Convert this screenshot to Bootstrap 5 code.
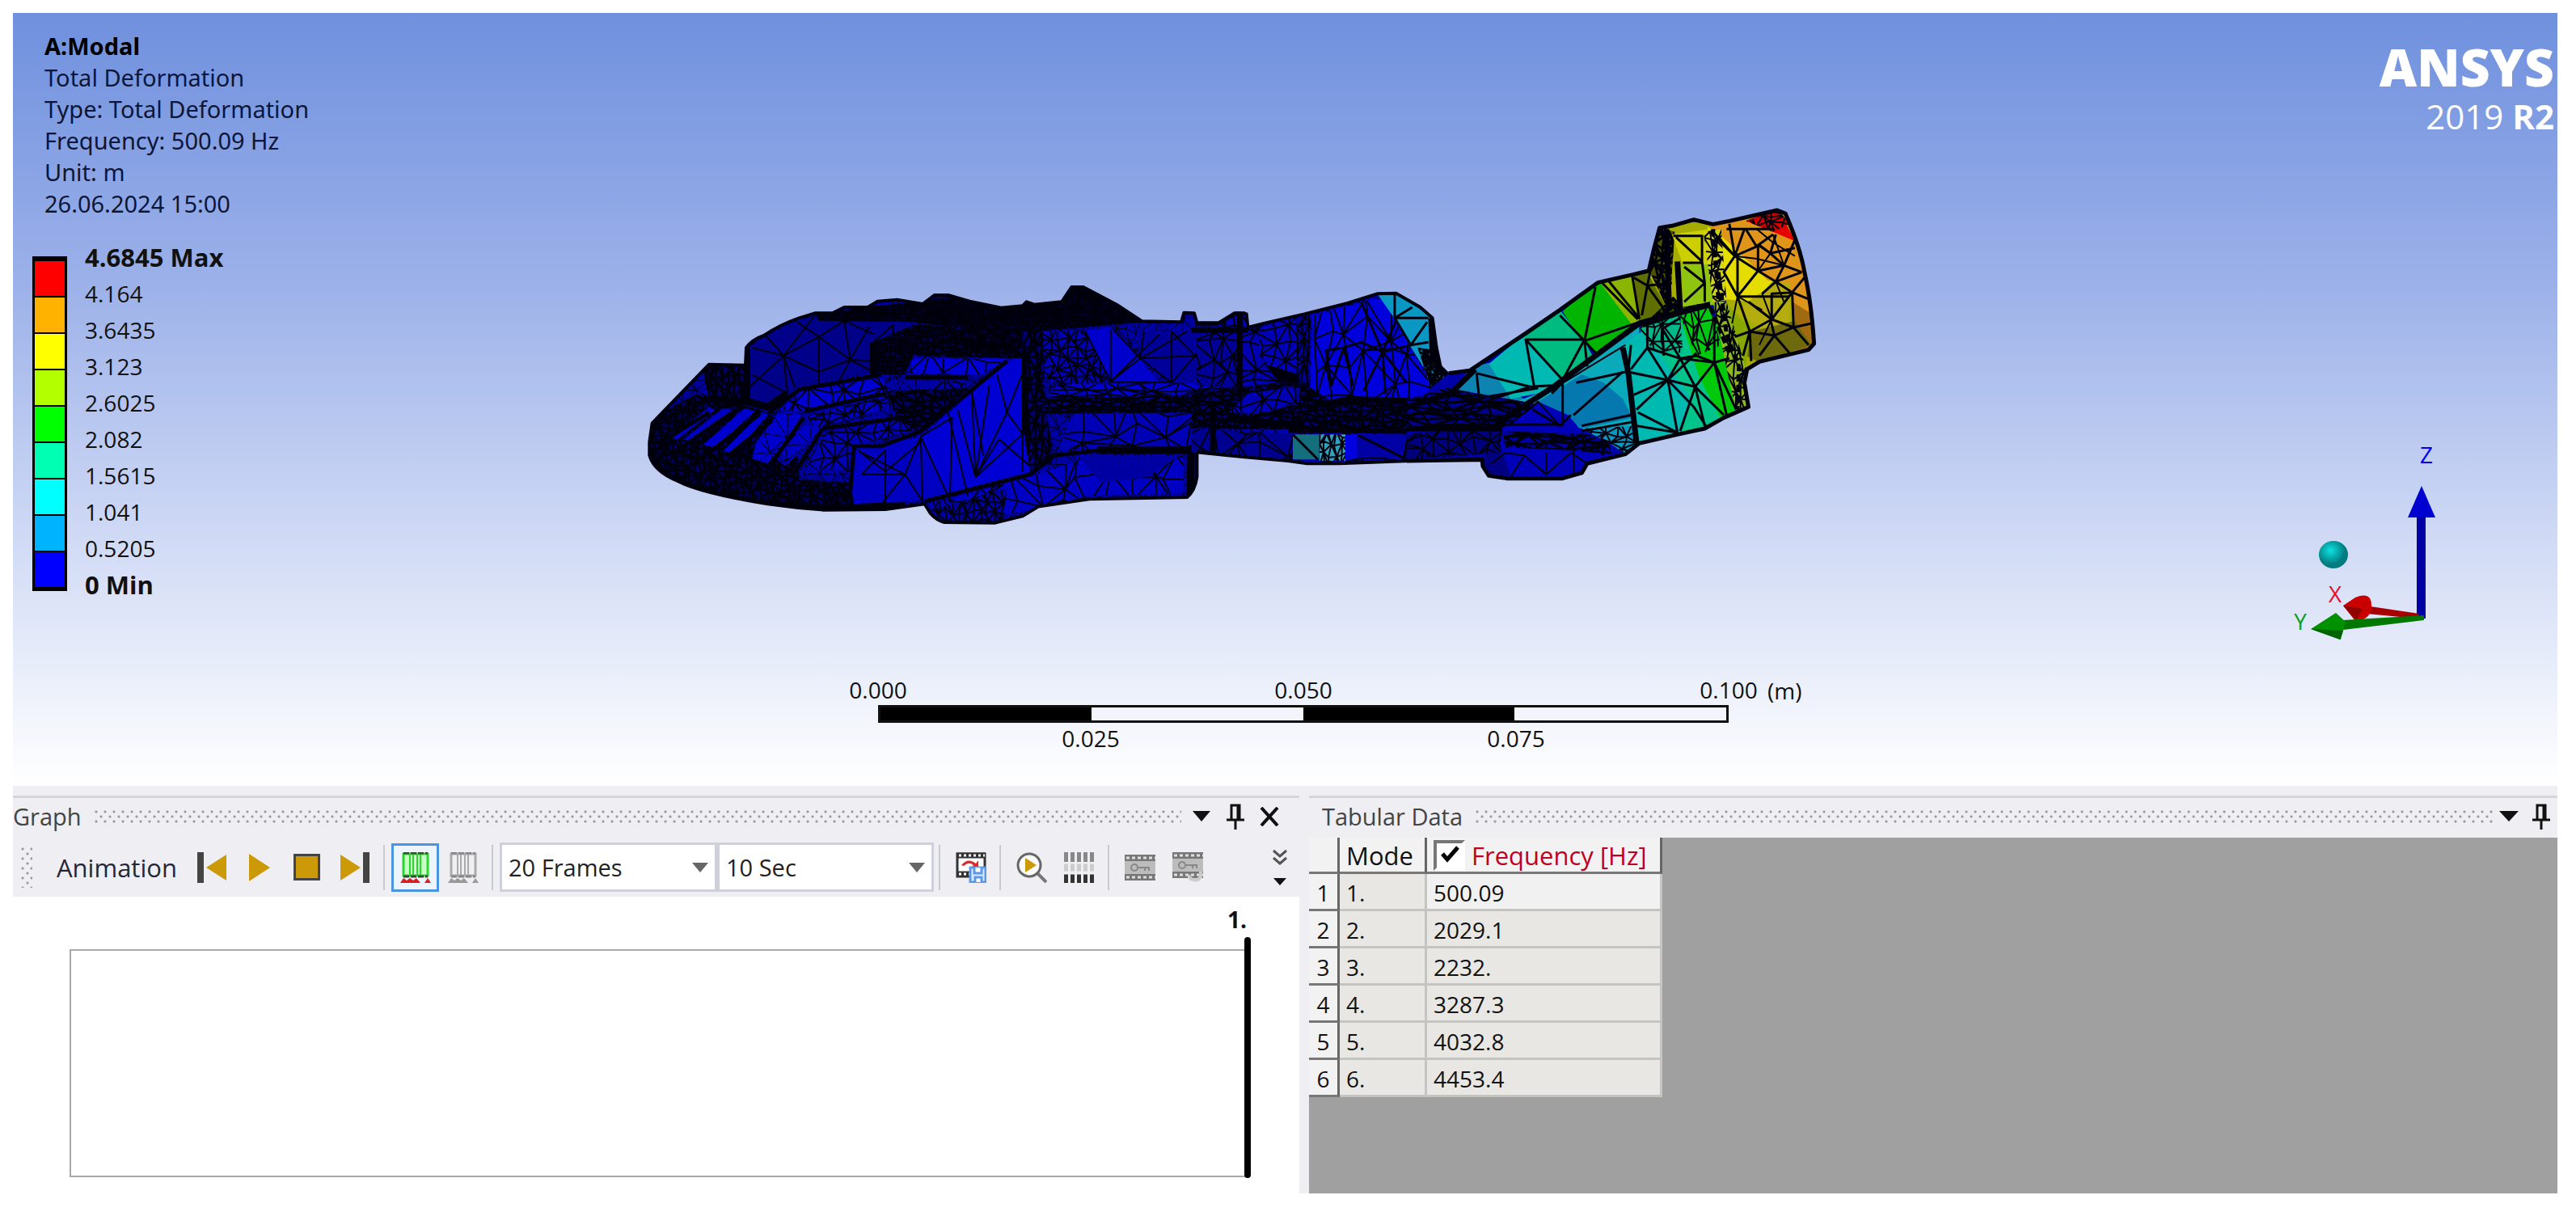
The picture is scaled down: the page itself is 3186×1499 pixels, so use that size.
<!DOCTYPE html>
<html lang="en">
<head>
<meta charset="utf-8">
<meta name="viewport" content="width=device-width, initial-scale=1">
<title>A:Modal - Total Deformation</title>
<link href="https://cdn.jsdelivr.net/npm/bootstrap@5.3.0/dist/css/bootstrap.min.css" rel="stylesheet">
<style>
  body { font-family: "Open Sans", "Noto Sans", sans-serif; font-size: 28px; line-height: 40px; color: #111; background: #fff; }
  .app-shell { min-height: 100vh; padding: 16px 23px 23px 16px; }
  .viewport3d { background: linear-gradient(#6f90de, #9cb1e9 35%, #d0daf5 68%, #fff); min-height: 800px; }
  .result-info { font-family: "Noto Sans", sans-serif; font-size: 29px; line-height: 39px; padding: 21px 0 0 39px; color: #0c1638; }
  .result-info strong { color: #000; }
  .legend { padding: 46px 0 0 24px; }
  .legend-bar { width: 43px; border: 3px solid #000; border-top-width: 6px; }
  .legend-bar i { display: block; height: 45px; border-bottom: 2px solid #000; }
  .legend-text { margin: -21px 0 0 22px; padding: 0; list-style: none; }
  .legend-text li { height: 45px; line-height: 45px; }
  .legend-text .fw-bold { font-size: 31px; }
  .brand { color: #fff; text-align: right; padding: 32px 4px 0 0; }
  .brand-name { font-size: 64px; line-height: 70px; font-weight: 800; }
  .brand-ver { font-size: 42px; line-height: 52px; }
  .brand-ver span { font-weight: 400; }
  .model { left: 0; top: 0; pointer-events: none; }
  .model .wire, .model .edge { fill: none; stroke: #00000c; vector-effect: non-scaling-stroke; stroke-linejoin: round; }
  .triad { right: 140px; bottom: 160px; width: 190px; height: 270px; }
  .triad text { font-size: 28px; font-family: "Open Sans", sans-serif; text-anchor: middle; }
  .ruler { left: 34%; width: 1052px; bottom: 40px; }
  .ruler-bar { height: 22px; border: 3px solid #111; background: #f4f5fc; }
  .ruler-bar i { width: 25%; }
  .ruler-bar i:nth-child(odd) { background: #000; }
  .ruler-row { height: 38px; line-height: 38px; }
  .ruler-row span { width: 0; display: flex; justify-content: center; white-space: nowrap; }
  .dock { background: #eeeef3; padding-top: 12px; gap: 12px; height: 504px; }
  .pane { border-top: 3px solid #d5d5db; }
  .pane-graph { width: 1591px; }
  .pane-head { height: 49px; padding-bottom: 4px; font-size: 29px; color: #444; }
  .dots { height: 16px; background-image: radial-gradient(circle at 2px 2px, #999 1px, transparent 2px), radial-gradient(circle at 8px 8px, #999 1px, transparent 2px); background-size: 11px 12px; }
  .grip { width: 14px; height: 50px; }
  .tool { width: 59px; height: 60px; padding: 0; border: 3px solid transparent; border-radius: 0; background: none; display: flex; align-items: center; justify-content: center; flex: none; }
  .tool.picked { border-color: #4a94e0; background: #eef4fd; }
  .head-tool { width: 42px; height: 42px; }
  .pane-table .head-tool { width: 40px; }
  .toolbar-row { height: 73px; padding: 0 12px 0 10px; color: #26263a; }
  .tool-label { margin-left: 30px; width: 162px; font-size: 31px; }
  .rule { width: 2px; height: 56px; background: #c9c9d0; margin: 0 8px 0 6px; }
  .pick { width: 269px; height: 61px; border: 3px solid #d0d0da; border-radius: 0; padding: 0 8px; font-size: 29px; line-height: 40px; color: #222; background: #fff url("data:image/svg+xml,%3Csvg xmlns='http://www.w3.org/2000/svg' width='20' height='12'%3E%3Cpath d='M0 0h20L10 12z' fill='%23666'/%3E%3C/svg%3E") no-repeat right 8px center; appearance: none; }
  .pick + .pick { width: 268px; margin-left: 0; }
  .plot { flex: 1; background: #fff; padding: 65px 63px 20px 70px; }
  .plot-box { border: 2px solid #a9a9a9; }
  .marker { width: 8px; top: -17px; bottom: -3px; right: -5px; background: #000; border-radius: 4px; }
  .marker-label { right: 0; top: -59px; font-weight: 700; font-size: 28px; }
  .sheet { flex: 1; background: #a0a0a0; }
  .modes { width: 437px; height: 321px; border-collapse: separate; border-spacing: 0; }
  .modes th, .modes td { padding: 2px 8px 0; font-weight: 400; line-height: 40px; border: solid #c4c4c0; border-width: 0 3px 3px 0; background: #e8e7e3; color: #111; }
  .modes th { background: #f2f2f2; border-color: #777; border-right-color: #666; }
  .modes thead th { font-size: 31px; }
  .modes tr > :first-child { width: 38px; padding: 2px 6px 0; text-align: center; }
  .modes tr > :nth-child(2) { width: 108px; }
  .modes tbody tr:first-child td:last-child { background: #f1f1f1; }
  .modes label { color: #c00020; }
  .tick { appearance: none; flex: none; width: 39px; height: 38px; margin: 0; border: 4px solid #fff; border-top-color: #777; border-left-color: #777; background: #fff; }
  .tick:checked { background: #fff url("data:image/svg+xml,%3Csvg xmlns='http://www.w3.org/2000/svg' viewBox='0 0 30 30'%3E%3Cpath d='M6 13l6 7L25 5' fill='none' stroke='%23000' stroke-width='5'/%3E%3C/svg%3E") center/contain; }
</style>
<script src="https://cdn.jsdelivr.net/npm/bootstrap@5.3.0/dist/js/bootstrap.bundle.min.js"></script>
</head>
<body>
<div class="app-shell d-flex flex-column">
  <main class="viewport3d position-relative flex-grow-1 d-flex justify-content-between align-items-start overflow-hidden">
    <svg class="model position-absolute w-100 h-100" viewBox="16 16 3147 956" aria-label="Deformed mesh">
      <defs>
        <clipPath id="cutHeel"><path d="M48 650L55 580 200 362 293 365 295 300 Q310 270 340 255 Q380 215 430 190L470 172 515 172 545 150 605 150 630 128 680 122 745 138 775 105 810 105 870 130 945 152 1000 145 1010 130 1030 140 1100 130 1125 75 1155 75 1240 140 1305 202 1405 205 1412 170 1438 172 1445 208 1500 208 1540 172 1570 172 1570 705 1510 695 1445 688 1445 780 Q1440 830 1420 855L1170 862 1040 890 1000 925 930 950 800 948 Q780 940 765 915L750 880 650 900 495 902 Q420 895 350 880 Q180 840 120 795 Q60 760 48 700Z"/></clipPath>
        <clipPath id="cutMid"><path d="M-20 212L75 212 150 172 185 175 190 225 250 210 400 175 560 135 670 100 740 98 830 150 875 190 890 300 905 370 935 400 1010 390 1130 300 1130 718 850 718 530 730 410 730 340 720 170 705 0 688 -20 686Z"/></clipPath>
        <clipPath id="cutToe"><path d="M60 745L153 665 230 655 430 520 560 430 700 328 830 298 885 285 905 200 925 125 970 118 1050 95 1120 112 1180 100 1355 60 1385 72 Q1440 200 1455 290 Q1480 400 1490 555L1470 578 1290 622 1245 650 1235 700 1250 790 1160 830 1090 870 1000 890 850 925 800 965 660 1000 640 1035 570 1055 365 1055 300 1045 278 1010 275 985 0 990 0 760Z"/></clipPath>
      </defs>

      <!-- heel block -->
      <g transform="translate(780 330) scale(.4847 .3333)">
        <g clip-path="url(#cutHeel)">
          <polygon points="40,60 1570,60 1570,960 40,960" fill="#0000a0" data-cell="34,44" data-w="1"/>
          <polygon points="300,300 345,255 470,180 700,205 740,250 620,290 620,390 420,450 330,520 300,480" fill="#000088"/>
          <polygon points="1160,235 1230,225 1350,430 1225,425" fill="#0000cd"/>
          <polygon points="1030,240 1160,235 1225,425 1100,440 1040,400" fill="#0000b0" data-cell="22,34" data-w="2"/>
          <polygon points="1290,240 1510,240 1520,430 1380,430 1300,330" fill="#000098"/>
          <polygon points="1090,435 1520,430 1520,480 1050,500" fill="#0000d0" data-cell="50,24" data-w="2"/>
          <polygon points="1130,540 1570,530 1570,700 1090,680" fill="#0000b4" data-cell="70,74" data-w="2"/>
          <polygon points="1440,590 1570,560 1570,700 1440,680" fill="#00007c" data-cell="50,50" data-w="2"/>
          <polygon points="950,370 1010,300 1020,760 750,860 570,880 580,680 740,630" fill="#0000d2"/>
          <polygon points="570,670 740,640 810,850 640,885 560,860" fill="#0000c0"/>
          <polygon points="760,880 1040,770 1140,720 1410,700 1410,840 1170,850 1000,910 800,940" fill="#0000c4" data-cell="56,90" data-w="2"/>
          <polygon points="1140,700 1400,700 1320,780 1200,800" fill="#0000a2"/>
          <polygon points="50,560 170,470 330,530 420,600 430,790 560,800 570,880 500,905 100,800 40,720" fill="#000058" data-cell="18,26" data-w="3"/>
          <polygon points="200,520 215,530 120,640 100,635" fill="#0000c0"/>
          <polygon points="235,525 262,530 160,650 135,640" fill="#0000c0"/>
          <polygon points="290,525 318,535 215,670 185,660" fill="#0000cc"/>
          <polygon points="335,540 352,548 265,690 235,685" fill="#0000cc"/>
          <polygon points="375,545 435,535 425,590 350,730 310,710 320,650" fill="#0000cc" data-cell="50,70" data-w="1"/>
          <polygon points="440,590 490,590 430,690 395,740 370,710" fill="#0000c4" data-cell="40,60" data-w="1"/>
          <polygon points="380,530 440,460 640,410 660,460 450,535" fill="#0000d0" data-cell="44,50" data-w="2"/>
          <polygon points="450,555 660,475 640,530 470,600" fill="#0000c0" data-cell="30,34" data-w="2"/>
          <polygon points="500,610 720,560 740,600 580,660 560,760 450,740" fill="#0000b4" data-cell="34,50" data-w="2"/>
          <polygon points="720,340 960,340 900,400 710,395" fill="#0000d6" data-cell="48,70" data-w="2"/>
          <polygon points="735,425 860,425 820,480 735,480" fill="#0000a4" data-cell="60,60" data-w="2"/>
          <polygon points="470,172 1140,60 1310,205 1030,240 950,250 720,205 480,200" fill="#000044" data-cell="14,16" data-w="3"/>
          <polygon points="720,215 1030,225 1010,340 720,330 700,400 620,400 620,280" fill="#000060" data-cell="20,17" data-w="3"/>
          <polygon points="180,365 295,365 300,500 200,490" fill="#000068" data-cell="14,40" data-w="3"/>
          <polygon points="1000,240 1050,240 1060,540 1080,700 1020,760 1000,600" fill="#000070" data-cell="16,50" data-w="3"/>
          <polygon points="1040,490 1560,470 1560,540 1040,545" fill="#000088" data-cell="30,16" data-w="3"/>
          <polygon points="765,900 960,820 950,950 800,950" fill="#0000a0" data-cell="18,44" data-w="2"/>
          <polygon points="1510,180 1570,175 1570,500 1520,520" fill="#000070" data-cell="16,80" data-w="3"/>
          <polygon points="650,460 860,450 740,620 680,560" fill="#000060" data-cell="24,24" data-w="3"/>
          <path class="wire" stroke-width="2" d="M390 330L470 180M390 330L300 450M390 330L480 260 560 345 480 390 390 330 400 470M390 330L310 300M390 330L420 450M480 260V440M480 260L420 200M480 260L545 200 560 345 620 390M560 345L610 220M560 345L530 430M560 345L620 350M545 200L620 250M310 400L400 470M345 255L390 330M670 215V270M740 210L690 270M670 215L620 280"/>
          <path class="wire" stroke-width="2" d="M1225 230L1225 425M1225 425L1160 240M1225 425L1350 250M1225 425L1300 340M1225 425L1380 430M1310 240L1300 340 1440 330 1500 240M1440 330L1380 240V430M1440 330L1520 420M1440 330L1380 430M1300 340L1380 430M1300 340L1230 230M1300 340L1420 240M1225 425L1100 330M1440 330L1520 300"/>
          <path class="wire" stroke-width="2" d="M740 630L810 850M740 630L745 880M740 630L700 770 590 690M740 630L820 560 815 850M835 530L880 780 870 460M880 780L915 440M880 780L960 540 935 400M960 540L1000 620M880 780L1000 620M960 540L1010 360M880 780L940 640 1020 740M870 460L900 700M1000 320V760M650 680L590 770 700 770 640 880M650 680V890M700 770L745 870M580 680L650 760 740 650M810 540L860 850"/>
          <path class="edge" stroke-width="5" d="M960 350L740 610 640 665 570 665 560 840M350 545L430 455 640 400M440 560L355 740M490 600L420 760M490 600L740 550M445 535L650 470M330 545L190 700M270 530L110 690M360 570L250 700M200 540L90 640M750 870L900 815 1020 770 1080 700 1200 680 1430 675M700 410H860M1005 300L1010 620"/>
          <path class="edge" stroke-width="9" d="M1190 680H1430L1428 850M296 300V500L350 520 400 470M300 500L200 490M620 280V400M820 270L980 300M48 680Q60 760 120 795 Q180 840 350 880L495 898 700 885"/>
        </g>
        <path class="edge" stroke-width="4" d="M1445 688L1445 780 Q1440 830 1420 855L1170 862 1040 890 1000 925 930 950 800 948 Q780 940 765 915L750 880 650 900 495 902 Q420 895 350 880 Q180 840 120 795 Q60 760 48 700L48 650 55 580 200 362 293 365 295 300 Q310 270 340 255 Q380 215 430 190L470 172 515 172 545 150 605 150 630 128 680 122 745 138 775 105 810 105 870 130 945 152 1000 145 1010 130 1030 140 1100 130 1125 75 1155 75 1240 140 1305 202 1405 205 1412 170 1438 172 1445 208 1500 208 1540 172 1568 172"/>
      </g>

      <!-- middle section -->
      <g transform="translate(1480 330) scale(.3333)">
        <g clip-path="url(#cutMid)">
          <polygon points="110,90 1130,90 1130,740 -20,740 -20,600 110,600" fill="#0000b0" data-cell="80,70" data-w="2"/>
          <polygon points="0,240 150,230 150,450 0,440" fill="#000098" data-cell="50,60" data-w="2"/>
          <polygon points="240,210 400,175 420,440 360,430 230,330" fill="#0000b8" data-cell="50,56" data-w="2"/>
          <polygon points="430,180 690,110 860,420 870,490 420,490" fill="#0000dc" data-cell="74,120" data-w="2"/>
          <polygon points="670,100 740,98 830,150 870,190 865,360 840,370 790,290 740,200" fill="#0a97c4"/>
          <polygon points="820,300 890,310 940,400 1010,390 880,490 860,420" fill="#126f86" data-cell="17,19" data-w="3"/>
          <polygon points="370,180 425,170 415,500 370,500" fill="#000090" data-cell="24,50" data-w="2"/>
          <polygon points="-20,470 380,420 500,500 880,500 1130,520 1130,610 -20,600" fill="#000070" data-cell="40,19" data-w="3"/>
          <polygon points="190,470 380,440 380,500 250,545 120,540" fill="#0000b4" data-cell="60,60" data-w="2"/>
          <polygon points="250,360 380,400 380,440 300,420" fill="#000070" data-cell="14,14" data-w="3"/>
          <polygon points="-20,600 360,620 360,725 -20,690" fill="#000090" data-cell="90,80" data-w="2"/>
          <polygon points="590,620 960,620 960,700 570,710" fill="#0000a4"/>
          <polygon points="357,622 455,622 455,715 357,715" fill="#146f7c"/>
          <polygon points="455,622 552,622 552,720 455,720" fill="#30a0bc" data-cell="20,40" data-w="2"/>
          <polygon points="552,622 595,622 595,710 552,710" fill="#0000e0"/>
          <path class="wire" stroke-width="3" d="M735 100V190H860M735 190L795 290 855 205M735 190L800 150M795 290L860 280M600 625L770 710 785 620M785 640L960 670 840 640M357 622L450 715M690 315L610 130M690 315L620 460M690 315L800 290M690 315L780 430M690 315L740 200M545 300L610 280 690 315M545 300L480 310 500 440 545 300 580 440M690 315L700 470"/>
          <path class="edge" stroke-width="7" d="M160 175V470M870 190L875 320 900 380M-20 235H190M420 520L560 490 880 500 1020 390M340 605L880 610 1020 585 1130 600M880 490L1130 300M60 500V690M110 565L400 590"/>
        </g>
        <path class="edge" stroke-width="4" d="M0 212H75L150 172 185 175 190 225 250 210 400 175 560 135 670 100 740 98 830 150 875 190 890 300 905 370 935 400 1010 390M1060 718H850L530 730H410L340 720 170 705 0 688"/>
      </g>

      <!-- toe and socket -->
      <g transform="translate(1740 240) scale(.338 .3333)">
        <g clip-path="url(#cutToe)">
          <rect x="0" y="50" width="1500" height="1010" fill="#0000a8"/>
          <polygon points="160,735 240,640 330,620 390,740 470,780 300,800" fill="#0d84b0"/>
          <polygon points="300,630 430,520 580,690 530,730 380,760" fill="#00b9b2"/>
          <polygon points="430,530 560,430 650,545 690,620 570,700" fill="#00bb80"/>
          <polygon points="570,435 700,320 850,490 700,590 640,545" fill="#00b400"/>
          <polygon points="700,320 830,290 860,480 820,480" fill="#8ab500"/>
          <polygon points="830,290 895,270 985,440 850,475" fill="#5f7000"/>
          <polygon points="320,800 530,720 850,480 860,940 640,870" fill="#0aaabb"/>
          <polygon points="480,770 640,670 720,700 790,760 825,830 640,870" fill="#0578b0"/>
          <polygon points="790,560 900,480 1010,450 1160,840 1000,900 850,930" fill="#00b9b0"/>
          <polygon points="860,500 1010,450 1080,660 1160,840 1000,890 1040,760" fill="#00c48a"/>
          <polygon points="1000,455 1100,420 1210,600 1250,800 1150,835 1070,680" fill="#00c80a"/>
          <polygon points="370,860 480,770 590,820 640,880 740,900 760,980 640,1060 300,1060 280,900" fill="#0000b8"/>
          <polygon points="640,870 830,860 850,930 800,965 750,930" fill="#0a98c0" data-cell="40,30" data-w="2"/>
          <polygon points="270,900 330,890 380,1050 290,1040" fill="#000080"/>
          <polygon points="0,890 350,860 340,960 0,985" fill="#00007c" data-cell="50,50" data-w="2"/>
          <polygon points="0,760 150,720 480,780 350,870 0,880" fill="#000090" data-cell="80,24" data-w="3"/>
          <polygon points="350,880 660,890 740,920 750,965 600,950 360,940" fill="#0000a0" data-cell="60,20" data-w="3"/>
          <polygon points="885,300 925,110 1120,100 1500,50 1500,600 1240,660 1130,400 1000,430 960,440" fill="#a6ad00"/>
          <polygon points="890,290 920,120 980,140 960,440" fill="#4d5200" data-cell="22,36" data-w="3"/>
          <polygon points="970,150 1110,130 1130,260 1010,260" fill="#ccd000"/>
          <polygon points="1005,260 1150,260 1140,410 1010,420" fill="#8fc510"/>
          <polygon points="1100,120 1210,200 1350,310 1270,400 1160,390 1110,240" fill="#e5dc00"/>
          <polygon points="1270,380 1400,310 1400,480 1330,520 1210,440" fill="#b5ac10"/>
          <polygon points="1110,120 1250,90 1420,150 1460,300 1480,470 1420,480 1400,330 1320,320 1200,200" fill="#df951a"/>
          <polygon points="1250,95 1360,55 1420,175 1340,140" fill="#e60000"/>
          <polygon points="1410,400 1490,450 1490,580 1420,580" fill="#a06a10"/>
          <polygon points="1260,510 1420,470 1480,560 1290,625 1240,600" fill="#6c6a0c"/>
          <polygon points="1160,400 1260,500 1240,640 1200,560" fill="#88a800"/>
          <polygon points="1120,400 1170,400 1250,680 1250,800 1205,810 1160,600" fill="#8cb81c" data-cell="26,54" data-w="2"/>
          <polygon points="1085,140 1150,130 1170,400 1120,400" fill="#d2d216" data-cell="30,40" data-w="2"/>
          <polygon points="975,380 1010,420 1110,400 1080,440 850,500" fill="#284800" data-cell="26,20" data-w="3"/>
          <polygon points="1240,100 1360,60 1400,110 1340,140" fill="#d00000" data-cell="34,26" data-w="2"/>
          <polygon points="1000,450 1110,420 1150,560 1060,600" fill="#00c810" data-cell="36,70" data-w="2"/>
          <polygon points="850,500 1000,450 1010,590 900,580" fill="#00b888" data-cell="46,44" data-w="2"/>
          <path class="wire" stroke-width="3" d="M435 540H650L570 690 435 540 465 710M560 450L650 545 690 345M650 545L850 475M650 545L700 600M650 545L660 640M715 330L845 465M740 325L850 460 825 305M255 665L450 715 530 710M255 665L265 760M230 665L165 735M300 765L450 715M190 770L480 720M290 765L380 800M265 790H370"/>
          <path class="wire" stroke-width="3" d="M820 560L810 660 955 690 880 570 820 650M955 690L830 745M955 690L840 800M955 690L1000 610 935 500M955 690L990 885M955 690L1055 715 1125 625 1000 610M955 690L1050 790 1100 870M1055 715L1090 860M1055 715L1000 880M1055 715L1160 820M1055 715L1000 610 1060 600 1125 625V480M1125 625L1170 820M1125 625L1205 800M845 810L990 885 840 860M620 700L800 660M530 740L570 700V860M610 820L790 660M370 855H560M460 800L560 860 600 820M640 860L820 820M640 880L830 845M880 570L1000 610M955 690L1060 590M880 490V570M935 500L1000 460M935 500L940 600M1125 625L1180 610"/>
          <path class="wire" stroke-width="3" d="M975 155H1080V250L985 160M1010 255H1080M1080 250L1090 330 1015 400M1090 330L1015 270M1090 330V400M1200 230L1120 140M1200 230L1130 160M1200 230L1235 130M1200 230L1280 195 1240 130M1200 230L1285 285 1210 380 1160 290 1200 230M1210 220V380M1285 285L1285 190 1340 150M1285 285L1350 325 1300 370M1285 285L1380 265 1330 220 1290 190M1380 265L1420 170M1380 265L1445 290M1380 265L1350 325 1410 365 1455 310M1330 220L1350 150M1330 220L1420 200M1410 365L1335 465 1415 495 1410 365 1470 390M1335 465V370L1410 365M1335 465L1255 510 1210 380M1335 465L1250 400M1255 510L1200 530M1255 510L1345 525 1415 495 1480 480M1255 510L1260 620M1345 525L1400 590M1345 525L1290 600M1255 510L1230 600M1210 380H1400M1345 525L1330 465M1170 130H1340M1180 110L1200 230M880 340L830 310M880 340L860 450M880 340L950 440M880 340L890 290M880 340L970 330M1445 290L1350 325M1415 495L1470 560"/>
          <path class="wire" stroke-width="2" d="M1200 230L1280 240 1380 265M1285 190L1330 220 1285 285M1300 370L1350 325 1380 400M1300 370L1335 465 1290 560M1280 130L1340 180 1420 230M1340 150L1380 265M1210 380L1190 480M1210 380L1300 430"/>
          <path class="edge" stroke-width="7" d="M0 790L160 740 250 650M360 830L530 720 850 480 1110 410M790 570L810 660 840 920M320 870L400 800 M0 870L350 870M990 250L1000 430M950 130L960 430"/>
          <path class="wire" stroke-width="2" d="M310 1000L360 960 430 970 510 1040 600 960M430 970L380 1050M510 1040V960M650 900L720 970M710 890L720 970M540 720L800 560M560 690L820 500M370 860L480 770 560 860M600 960L660 1000M610 950V1045"/>
          <path class="wire" stroke-width="5" stroke-dasharray="9 4" d="M1140 290L1170 520 1215 640 1210 800M1110 420L1180 590M1120 130L1140 390"/>
        </g>
        <path class="edge" stroke-width="5" d="M153 665L230 655 430 520 560 430 700 328 830 298 885 285 905 200 925 125 970 118 1050 95 1120 112 1180 100 1355 60 1385 72 Q1440 200 1455 290 Q1480 400 1490 555L1470 578 1290 622 1245 650 1235 700 1250 790 1160 830 1090 870 1000 890 850 925 800 965 660 1000 640 1035 570 1055 365 1055 300 1045 278 1010 275 985 0 990"/>
      </g>
    </svg>

    <div class="position-relative">
      <div class="result-info">
        <strong>A:Modal</strong><br>Total Deformation<br>Type: Total Deformation<br>Frequency: 500.09 Hz<br>Unit: m<br>26.06.2024 15:00
      </div>
      <div class="legend d-flex align-items-start">
        <div class="legend-bar">
          <i style="background:#f00"></i><i style="background:#ffb300"></i><i style="background:#ff0"></i><i style="background:#b3ff00"></i><i style="background:#0f0"></i><i style="background:#00ffb3"></i><i style="background:#0ff"></i><i style="background:#00b3ff"></i><i style="background:#00f"></i>
        </div>
        <ul class="legend-text">
          <li class="fw-bold">4.6845 Max</li><li>4.164</li><li>3.6435</li><li>3.123</li><li>2.6025</li><li>2.082</li><li>1.5615</li><li>1.041</li><li>0.5205</li><li class="fw-bold">0 Min</li>
        </ul>
      </div>
    </div>

    <div class="brand">
      <div class="brand-name">ANSYS</div>
      <div class="brand-ver"><span>2019</span> <b>R2</b></div>
    </div>

    <svg class="triad position-absolute" viewBox="2833 542 190 270" aria-label="Axis triad">
      <defs><radialGradient id="ball" cx=".4" cy=".35"><stop offset="0" stop-color="#10e0e0"/><stop offset="1" stop-color="#007c80"/></radialGradient></defs>
      <text x="3001" y="573" fill="#00e">Z</text>
      <path d="M2989 638h11v127h-11z" fill="#0000a4"/><path d="M2995 601l17 39h-34z" fill="#0000d0"/>
      <ellipse cx="2886" cy="686" rx="18" ry="17" fill="url(#ball)"/>
      <path d="M2918 748l74 11-2 6-74-7z" fill="#a80000"/><path d="M2898 749l15-10q20-8 20 10 0 18-20 19z" fill="#c80000"/><path d="M2898 749l24 4-8 14z" fill="#900000"/>
      <path d="M2898 767l100-6v6l-100 12z" fill="#007800"/><path d="M2858 778l31-20 12 11-6 22z" fill="#009000"/><path d="M2858 778l40 2-4 11z" fill="#006400"/>
      <text x="2888" y="745" fill="#e8102c">X</text>
      <text x="2845" y="779" fill="#10a020">Y</text>
    </svg>

    <div class="ruler position-absolute">
      <div class="ruler-row d-flex justify-content-between"><span>0.000</span><span>0.050</span><span>0.100</span></div>
      <div class="position-absolute top-0 start-100 ps-5">(m)</div>
      <div class="ruler-bar d-flex"><i></i><i></i><i></i><i></i></div>
      <div class="ruler-row d-flex justify-content-around"><span>0.025</span><span>0.075</span></div>
    </div>
  </main>

  <div class="dock d-flex">
    <section class="pane pane-graph d-flex flex-column">
      <header class="pane-head d-flex align-items-center pe-3">
        <span>Graph</span><div class="dots flex-grow-1 ms-3 me-1"></div>
        <button class="tool head-tool" aria-label="Menu"><svg width="22" height="13"><path d="M0 0h22L11 13z" fill="#111"/></svg></button>
        <button class="tool head-tool" aria-label="Pin"><svg width="22" height="32" fill="none" stroke="#111" stroke-width="3"><path d="M6 19V2h10v17M14 2v17M0 20h22M11 20v12"/></svg></button>
        <button class="tool head-tool" aria-label="Close"><svg width="24" height="24"><path d="M2 1l20 22M22 1L2 23" stroke="#111" stroke-width="4"/></svg></button>
      </header>
      <div class="toolbar-row d-flex align-items-center">
        <div class="dots grip"></div><span class="tool-label">Animation</span>
        <button class="tool" aria-label="First"><svg width="36" height="38"><path d="M0 0h8v38H0z" fill="#444"/><path d="M36 3v32L11 19z" fill="#cc9a08"/></svg></button>
        <button class="tool" aria-label="Play"><svg width="26" height="34"><path d="M0 0l26 17L0 34z" fill="#cc9a08"/></svg></button>
        <button class="tool" aria-label="Stop"><svg width="33" height="33"><path d="M1.500 1.500h30v30h-30z" fill="#cc9a08" stroke="#444" stroke-width="3"/></svg></button>
        <button class="tool" aria-label="Last"><svg width="36" height="38"><path d="M28 0h8v38h-8z" fill="#444"/><path d="M0 3v32l25-16z" fill="#cc9a08"/></svg></button>
        <div class="rule"></div>
        <button class="tool picked" aria-label="Distributed"><svg width="38" height="38"><path d="M4 2h30v27H4z" fill="#c8ffc8" stroke="#28d828" stroke-width="3"/><path d="M12 2v27M16 2v27M21 2v27M25 2v27" stroke="#28d828" stroke-width="2"/><path d="M4 1h30M4 30h30" stroke="#444" stroke-width="3" stroke-dasharray="7 2"/><path d="M0 38l4-6 4 3 4-3 4 3 4-3 5 6zM30 38l4-6 4 6z" fill="#d82020"/></svg></button>
        <button class="tool" aria-label="Result sets"><svg width="38" height="38"><path d="M4 2h30v27H4z" fill="#f0f0f2" stroke="#aaa" stroke-width="3"/><path d="M12 2v27M16 2v27M21 2v27M25 2v27" stroke="#aaa" stroke-width="2"/><path d="M4 1h30M4 30h30" stroke="#888" stroke-width="3" stroke-dasharray="7 2"/><path d="M0 38l4-6 4 3 4-3 4 3 4-3 5 6zM30 38l4-6 4 6z" fill="#999"/></svg></button>
        <div class="rule"></div>
        <select class="pick" aria-label="Frames"><option>20 Frames</option></select>
        <select class="pick" aria-label="Duration"><option>10 Sec</option></select>
        <div class="rule"></div>
        <button class="tool" aria-label="Export video"><svg width="38" height="38"><path d="M2 2h34v28H2z" fill="#fff" stroke="#333" stroke-width="3"/><path d="M1 4h36M1 27h18" stroke="#333" stroke-width="7"/><path d="M4 4h32M4 27h14" stroke="#fff" stroke-width="3" stroke-dasharray="3 3"/><path d="M7 16q8-10 18-2l3-4v9h-9l3-3q-6-5-12 1z" fill="#e02828"/><path d="M18 19h19v18H18z" fill="#d8eaff" stroke="#5a9ae8" stroke-width="3"/><path d="M23 19v7h9v-7M24 37v-6h8v6" fill="#fff" stroke="#5a9ae8" stroke-width="3"/></svg></button>
        <div class="rule"></div>
        <button class="tool" aria-label="Zoom to fit"><svg width="38" height="38"><path d="M25 25l12 12" stroke="#777" stroke-width="4"/><circle cx="16" cy="16" r="14" fill="#fafafa" stroke="#666" stroke-width="3"/><path d="M11 7l14 9-14 9z" fill="#cc9a08"/></svg></button>
        <button class="tool" aria-label="Lines"><svg width="38" height="38" fill="none" stroke-width="5" stroke-dasharray="5 3"><path d="M0 6h38" stroke="#888" stroke-width="12"/><path d="M0 19h38" stroke="#ccc" stroke-width="9"/><path d="M0 33h38" stroke="#333" stroke-width="11"/></svg></button>
        <div class="rule"></div>
        <button class="tool" aria-label="Update frame"><svg width="38" height="32"><path d="M0 0h38v32H0z" fill="#bcbcbc"/><path d="M0 4h38M0 28h38" stroke="#777" stroke-width="8"/><path d="M2 4h36M2 28h36" stroke="#ddd" stroke-width="3" stroke-dasharray="4 3"/><circle cx="12" cy="16" r="4" fill="none" stroke="#888" stroke-width="2"/><path d="M16 16h14v4M25 16v4" fill="none" stroke="#888" stroke-width="2"/></svg></button>
        <button class="tool" aria-label="Update range"><svg width="38" height="38"><path d="M0 0h38v32H0z" fill="#bcbcbc"/><path d="M0 4h38M0 28h38" stroke="#777" stroke-width="8"/><path d="M2 4h36M2 28h36" stroke="#ddd" stroke-width="3" stroke-dasharray="4 3"/><circle cx="12" cy="16" r="4" fill="none" stroke="#888" stroke-width="2"/><path d="M16 16h14v4M25 16v4" fill="none" stroke="#888" stroke-width="2"/><path d="M20 28a8 8 0 0 0 15 2v-6" fill="none" stroke="#ccc" stroke-width="4"/></svg></button>
        <button class="tool ms-auto w-auto" aria-label="More"><svg width="18" height="46"><path d="M1 2l8 7 8-7M1 11l8 7 8-7" fill="none" stroke="#555" stroke-width="3"/><path d="M1 36h16l-8 9z" fill="#111"/></svg></button>
      </div>
      <div class="plot d-flex">
        <div class="plot-box position-relative flex-grow-1"><div class="marker position-absolute"></div><span class="marker-label position-absolute">1.</span></div>
      </div>
    </section>

    <section class="pane pane-table d-flex flex-column flex-grow-1">
      <header class="pane-head d-flex align-items-center ps-3">
        <span>Tabular Data</span><div class="dots flex-grow-1 ms-3"></div>
        <button class="tool head-tool" aria-label="Menu"><svg width="24" height="13"><path d="M0 0h24L12 13z" fill="#111"/></svg></button>
        <button class="tool head-tool" aria-label="Pin"><svg width="22" height="32" fill="none" stroke="#111" stroke-width="3"><path d="M6 19V2h10v17M14 2v17M0 20h22M11 20v12"/></svg></button>
      </header>
      <div class="sheet">
        <table class="modes">
          <thead><tr><th></th><th>Mode</th><th><div class="d-flex align-items-center"><input class="tick" type="checkbox" id="freq" checked><label for="freq" class="ps-2 text-nowrap">Frequency [Hz]</label></div></th></tr></thead>
          <tbody>
            <tr><th>1</th><td>1.</td><td>500.09</td></tr>
            <tr><th>2</th><td>2.</td><td>2029.1</td></tr>
            <tr><th>3</th><td>3.</td><td>2232.</td></tr>
            <tr><th>4</th><td>4.</td><td>3287.3</td></tr>
            <tr><th>5</th><td>5.</td><td>4032.8</td></tr>
            <tr><th>6</th><td>6.</td><td>4453.4</td></tr>
          </tbody>
        </table>
      </div>
    </section>
  </div>
</div>
<script>
  // Lays a jittered triangular wire mesh over every surface patch that names a cell size.
  (function () {
    var ns = 'http://www.w3.org/2000/svg', seed = 7;
    function rnd() { seed = (seed * 16807) % 2147483647; return seed / 2147483647 - 0.5; }
    document.querySelectorAll('.model polygon[data-cell]').forEach(function (poly, n) {
      var cell = poly.dataset.cell.split(',').map(Number), box = poly.getBBox();
      var cols = Math.ceil(box.width / cell[0]) + 1, rows = Math.ceil(box.height / cell[1]) + 1, grid = [], d = '';
      for (var r = 0; r <= rows; r++) {
        grid.push([]);
        for (var c = 0; c <= cols; c++) {
          grid[r].push([Math.round(box.x + (c + rnd() * 0.8) * cell[0]), Math.round(box.y + (r + rnd() * 0.8) * cell[1])]);
        }
      }
      for (r = 0; r < rows; r++) for (c = 0; c < cols; c++) {
        var p = grid[r][c], q = grid[r][c + 1], s = grid[r + 1][c], t = grid[r + 1][c + 1];
        d += 'M' + q + 'L' + p + 'L' + s + ((r + c) % 2 ? 'M' + p + 'L' + t : 'M' + q + 'L' + s);
      }
      var clip = document.createElementNS(ns, 'clipPath');
      clip.id = 'patch' + n;
      clip.appendChild(poly.cloneNode());
      poly.parentNode.insertBefore(clip, poly);
      var path = document.createElementNS(ns, 'path');
      path.setAttribute('class', 'wire');
      path.setAttribute('d', d);
      path.setAttribute('stroke-width', poly.dataset.w);
      path.setAttribute('clip-path', 'url(#patch' + n + ')');
      poly.parentNode.insertBefore(path, poly.nextSibling);
    });
  })();
</script>
</body>
</html>
